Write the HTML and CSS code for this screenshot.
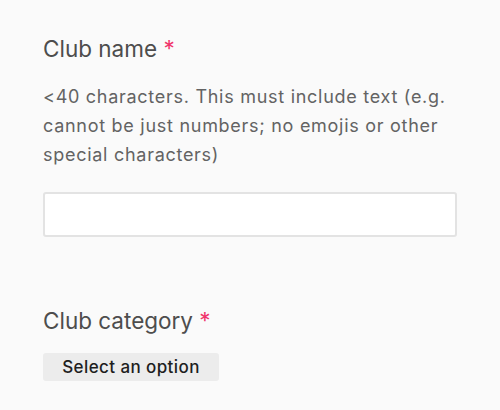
FILE: index.html
```html
<!DOCTYPE html>
<html>
<head>
<meta charset="utf-8">
<link rel="stylesheet" href="styles.css">
</head>
<body>
<div class="form">
  <div class="field">
    <label class="label">Club name <span class="req">*</span></label>
    <p class="help">&lt;40 characters. This must include text (e.g. cannot be just numbers; no emojis or other special characters)</p>
    <input class="input" type="text">
  </div>
  <div class="field field-cat">
    <label class="label">Club category <span class="req">*</span></label>
    <button class="select">Select an option</button>
  </div>
</div>
</body>
</html>
```

FILE: styles.css
```css
html, body {
  margin: 0;
  padding: 0;
  background: #fafafa;
  font-family: Inter, "Noto Sans", sans-serif;
}
.form {
  padding: 35px 43px 0 43px;
  display: flex;
  flex-direction: column;
}
.field {
  display: flex;
  flex-direction: column;
}
.label {
  font-size: 22.5px;
  line-height: 28px;
  color: #4d4d4d;
}
.req {
  color: #f0356b;
}
.help {
  margin: 20px 0 0 0;
  font-size: 18px;
  line-height: 28.8px;
  letter-spacing: 0.72px;
  color: #636363;
  width: 420px;
}
.input {
  margin: 23px 0 0 0;
  width: 414px;
  height: 45px;
  box-sizing: border-box;
  border: 2px solid #e3e3e3;
  border-radius: 3px;
  background: #fff;
  outline: none;
}
.field-cat {
  margin-top: 70px;
}
.select {
  margin-top: 18px;
  align-self: flex-start;
  width: 176px;
  height: 28px;
  border: none;
  border-radius: 3px;
  background: #ececec;
  font-family: Inter, "Noto Sans", sans-serif;
  font-size: 17px;
  font-weight: 500;
  letter-spacing: 0.4px;
  color: #1e1e1e;
  padding: 0 0 0 0;
}
```
